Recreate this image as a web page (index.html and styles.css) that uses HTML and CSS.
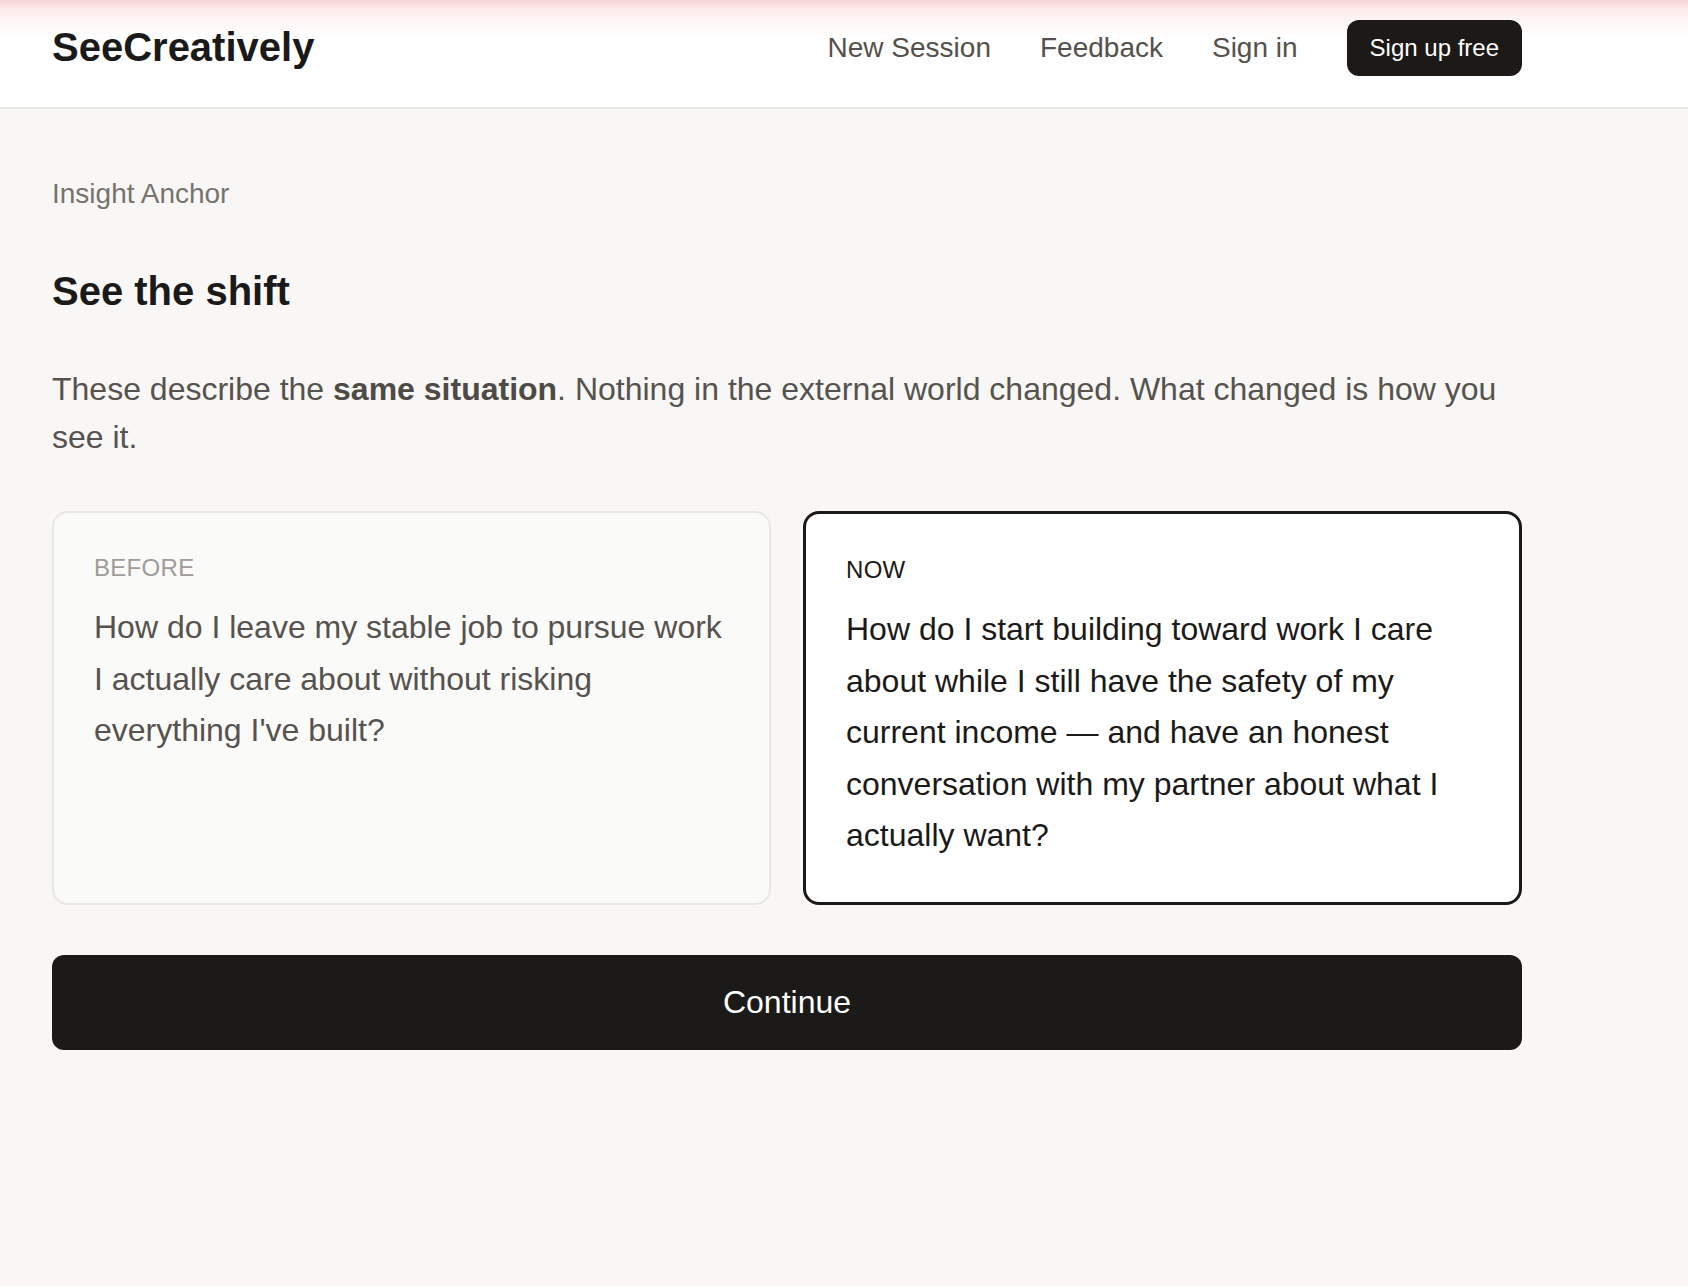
FILE: index.html
```html
<!DOCTYPE html>
<html lang="en">
<head>
<meta charset="utf-8">
<title>SeeCreatively — Insight Anchor</title>
<link rel="stylesheet" href="styles.css">
</head>
<body>
<header class="site-header">
  <div class="header-inner">
    <a class="logo" href="#">SeeCreatively</a>
    <nav class="nav">
      <a class="nav-link" href="#">New Session</a>
      <a class="nav-link" href="#">Feedback</a>
      <a class="nav-link" href="#">Sign in</a>
      <a class="nav-cta" href="#">Sign up free</a>
    </nav>
  </div>
</header>
<main class="main">
  <p class="eyebrow">Insight Anchor</p>
  <h1 class="title">See the shift</h1>
  <p class="lead">These describe the <strong>same situation</strong>. Nothing in the external world changed. What changed is how you see it.</p>
  <div class="compare">
    <section class="card card-before">
      <div class="card-label">Before</div>
      <p class="card-text">How do I leave my stable job to pursue work I actually care about without risking everything I've built?</p>
    </section>
    <section class="card card-now">
      <div class="card-label">Now</div>
      <p class="card-text">How do I start building toward work I care about while I still have the safety of my current income — and have an honest conversation with my partner about what I actually want?</p>
    </section>
  </div>
  <button class="continue" type="button">Continue</button>
</main>
</body>
</html>
```
FILE: styles.css
```css
* { box-sizing: border-box; }
html, body { margin: 0; padding: 0; }
body {
  background: #f8f7f5;
  font-family: "Liberation Sans", Arial, sans-serif;
  color: #1c1a18;
  min-height: 1286px;
}
a { text-decoration: none; }

.site-header {
  height: 109px;
  background: linear-gradient(to bottom, #f7d3d3 0px, #fbeae8 8px, #fef9f8 24px, #ffffff 40px);
  border-bottom: 2px solid #e9e7e4;
}
.header-inner {
  width: 1522px;
  padding-left: 52px;
  height: 100%;
  display: flex;
  align-items: center;
  justify-content: space-between;
  padding-bottom: 12px;
}
.logo {
  font-size: 40px;
  font-weight: 700;
  color: #1c1a18;
}
.nav {
  display: flex;
  align-items: center;
  gap: 49px;
}
.nav-link {
  font-size: 28px;
  color: #55504b;
}
.nav-cta {
  display: flex;
  align-items: center;
  height: 56px;
  padding: 0 23px;
  background: #1c1917;
  color: #ffffff;
  border-radius: 12px;
  font-size: 24px;
}

.main {
  width: 1522px;
  padding: 69px 0 0 52px;
}
.eyebrow {
  margin: 0;
  font-size: 28px;
  color: #78726c;
}
.title {
  margin: 59px 0 0;
  font-size: 40px;
  font-weight: 700;
  color: #1c1a18;
}
.lead {
  margin: 51px 0 0;
  font-size: 32px;
  line-height: 48px;
  color: #57524d;
}
.lead strong { font-weight: 700; color: #4f4a45; }

.compare {
  margin-top: 50px;
  display: grid;
  grid-template-columns: 1fr 1fr;
  gap: 32px;
}
.card {
  border-radius: 16px;
  padding: 42px 40px 40px;
}
.card-before {
  background: #fafaf9;
  border: 2px solid #e9e7e4;
  padding-top: 41px;
}
.card-now {
  background: #ffffff;
  border: 3px solid #1c1a18;
}
.card-label {
  font-size: 24px;
  text-transform: uppercase;
  letter-spacing: 0.3px;
  margin-bottom: 20px;
}
.card-before .card-label { color: #a09b96; }
.card-now .card-label { color: #1c1a18; }
.card-text {
  margin: 0;
  font-size: 32px;
  line-height: 51.5px;
}
.card-before .card-text { color: #57524d; }
.card-now .card-text { color: #1c1a18; }

.continue {
  display: block;
  width: 100%;
  margin-top: 50px;
  height: 95px;
  border: none;
  border-radius: 12px;
  background: #1c1a18;
  color: #ffffff;
  font-family: "Liberation Sans", Arial, sans-serif;
  font-size: 32px;
  cursor: pointer;
}
```
